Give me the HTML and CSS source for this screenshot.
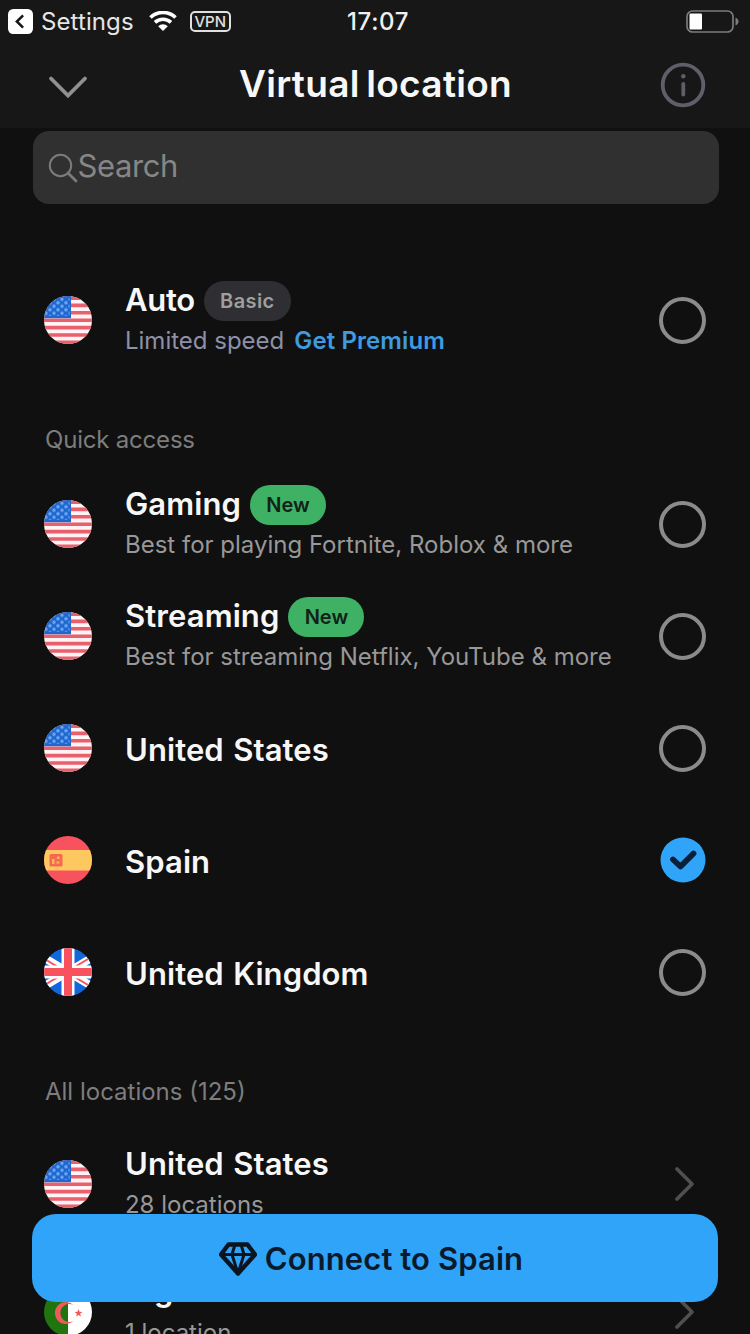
FILE: index.html
```html
<!DOCTYPE html>
<html lang="en">
<head>
<meta charset="utf-8">
<title>Virtual location</title>
<link rel="stylesheet" href="styles.css">
</head>
<body>
<svg class="defs" width="0" height="0" aria-hidden="true">
  <defs>
    <clipPath id="round"><circle cx="24" cy="24" r="24"/></clipPath>
    <pattern id="stars" width="8" height="7" patternUnits="userSpaceOnUse" x="0" y="1.500">
      <circle cx="2" cy="1.750" r="1.700" fill="#6fa9f3"/>
      <circle cx="6" cy="5.250" r="1.700" fill="#6fa9f3"/>
    </pattern>
    <symbol id="us" viewBox="0 0 48 48">
      <g clip-path="url(#round)">
        <rect width="48" height="48" fill="#fff3f5"/>
        <path d="M0 1.900h48M0 9.200h48M0 16.600h48M0 24h48" transform="translate(0 .2)" stroke="#e8606b" stroke-width="3.600"/>
        <path d="M0 31.600h48M0 39h48M0 46.300h48" stroke="#e8606b" stroke-width="3.600"/>
        <rect width="27" height="22.200" fill="#1f66cf"/>
        <rect x="1" y="1.500" width="24.500" height="18.500" fill="url(#stars)"/>
      </g>
    </symbol>
    <symbol id="es" viewBox="0 0 48 48">
      <g clip-path="url(#round)">
        <rect width="48" height="48" fill="#f9525f"/>
        <rect y="14" width="48" height="20.500" fill="#fdc85f"/>
        <rect x="5.500" y="18" width="13" height="12.500" rx="1.500" fill="#f4694f"/>
        <path d="M8 23h2.500v5H8zM13 20.500h2.500v2.500H13zM12.500 25.500h3v2h-3z" fill="#fdb65b"/>
      </g>
    </symbol>
    <symbol id="gb" viewBox="0 0 48 48">
      <g clip-path="url(#round)">
        <rect width="48" height="48" fill="#1267dc"/>
        <path d="M-6 6 54 42M54 6-6 42" stroke="#fff" stroke-width="8"/>
        <path d="M-6 6 24 24M54 42 24 24" stroke="#f9525f" stroke-width="1.800" transform="translate(0 1)"/>
        <path d="M54 6 24 24M-6 42 24 24" stroke="#f9525f" stroke-width="1.800" transform="translate(0 -1)"/>
        <path d="M24 0v48M0 24h48" stroke="#fff" stroke-width="13"/>
        <path d="M24 0v48M0 24h48" stroke="#f9525f" stroke-width="8"/>
      </g>
    </symbol>
    <symbol id="dz" viewBox="0 0 48 48">
      <g clip-path="url(#round)">
        <rect width="24" height="48" fill="#20750f"/>
        <rect x="24" width="24" height="48" fill="#fff"/>
        <path d="M29.500 17a11 11 0 1 0 0 16 9 9 0 1 1 0-16z" fill="#ee5b5b"/>
        <path d="M34.500 21l1 2.800 3 .1-2.400 1.800.9 2.900-2.500-1.700-2.500 1.700.9-2.900-2.400-1.800 3-.1z" fill="#ee5b5b"/>
      </g>
    </symbol>
    <symbol id="next" viewBox="0 0 20 34">
      <path d="M2 2 17 17 2 32" fill="none" stroke="#505050" stroke-width="3.600" stroke-linecap="round" stroke-linejoin="round"/>
    </symbol>
  </defs>
</svg>

<div class="screen">
  <header class="top">
    <div class="status">
      <div class="status-left">
        <svg class="back" viewBox="0 0 24 24"><rect width="24" height="24" rx="5" fill="#fff"/><path d="M14.500 6.200 8.500 12l6 5.800" fill="none" stroke="#161616" stroke-width="2.400"/></svg>
        <span class="back-label">Settings</span>
        <svg class="wifi" viewBox="0 0 28 20"><path d="M1.500 6.500a18 18 0 0 1 25 0M6 11.400a11.700 11.700 0 0 1 16 0" fill="none" stroke="#fff" stroke-width="3.600"/><path d="M14 20 9.200 15.300a6.900 6.900 0 0 1 9.600 0z" fill="#fff"/></svg>
        <span class="vpn">VPN</span>
      </div>
      <span class="clock">17:07</span>
      <svg class="battery" viewBox="0 0 53 23"><rect x="1" y="1" width="46" height="21" rx="5.500" fill="none" stroke="#7c7c7c" stroke-width="1.700"/><rect x="3.500" y="3.500" width="12.500" height="16" rx="1" fill="#fff"/><path d="M49.500 7.500c4 1.500 4 6.500 0 8z" fill="#7c7c7c"/></svg>
    </div>
    <div class="titlebar">
      <svg class="down" viewBox="0 0 40 24"><path d="M3 3.500 20 20.500 37 3.500" fill="none" stroke="#909090" stroke-width="3.800" stroke-linecap="round"/></svg>
      <h1 class="title">Virtual location</h1>
      <svg class="info" viewBox="0 0 46 46"><circle cx="23" cy="23" r="20.300" fill="none" stroke="#5e5f6b" stroke-width="3.800"/><circle cx="23.300" cy="14.200" r="2.200" fill="#5e5f6b"/><path d="M23.300 22v10.500" stroke="#5e5f6b" stroke-width="3.800" stroke-linecap="round"/></svg>
    </div>
  </header>

  <div class="search">
    <svg class="lens" viewBox="0 0 30 30"><circle cx="12.500" cy="12.500" r="10.700" fill="none" stroke="#7b7b7b" stroke-width="2"/><path d="M20 20l8 8" stroke="#7b7b7b" stroke-width="2.800" stroke-linecap="round"/></svg>
    <span class="placeholder">Search</span>
  </div>

  <main class="list">
    <div class="row">
      <svg class="flag"><use href="#us"/></svg>
      <div class="text">
        <div class="line"><span class="name auto">Auto</span><span class="badge basic">Basic</span></div>
        <div class="line sub limited"><span>Limited speed</span><span class="premium">Get Premium</span></div>
      </div>
      <span class="radio"></span>
    </div>

    <h2 class="section quick">Quick access</h2>
    <div class="row">
      <svg class="flag"><use href="#us"/></svg>
      <div class="text">
        <div class="line"><span class="name">Gaming</span><span class="badge new">New</span></div>
        <div class="line sub">Best for playing Fortnite, Roblox &amp; more</div>
      </div>
      <span class="radio"></span>
    </div>
    <div class="row">
      <svg class="flag"><use href="#us"/></svg>
      <div class="text">
        <div class="line"><span class="name">Streaming</span><span class="badge new">New</span></div>
        <div class="line sub">Best for streaming Netflix, YouTube &amp; more</div>
      </div>
      <span class="radio"></span>
    </div>
    <div class="row">
      <svg class="flag"><use href="#us"/></svg>
      <div class="text"><div class="line single"><span class="name">United States</span></div></div>
      <span class="radio"></span>
    </div>
    <div class="row">
      <svg class="flag"><use href="#es"/></svg>
      <div class="text"><div class="line single"><span class="name">Spain</span></div></div>
      <svg class="checked" viewBox="0 0 46 46"><circle cx="23" cy="23" r="22.500" fill="#2fa4f8"/><path d="M13 22.500 20.500 29.500 33.500 16.500" fill="none" stroke="#0b1f38" stroke-width="5.800" stroke-linecap="round" stroke-linejoin="round"/></svg>
    </div>
    <div class="row">
      <svg class="flag"><use href="#gb"/></svg>
      <div class="text"><div class="line single"><span class="name">United Kingdom</span></div></div>
      <span class="radio"></span>
    </div>

    <h2 class="section">All locations (125)</h2>
    <div class="row tall">
      <svg class="flag"><use href="#us"/></svg>
      <div class="text">
        <div class="line"><span class="name">United States</span></div>
        <div class="line sub">28 locations</div>
      </div>
      <svg class="next"><use href="#next"/></svg>
    </div>
    <div class="row tall">
      <svg class="flag"><use href="#dz"/></svg>
      <div class="text">
        <div class="line"><span class="name algeria">Algeria</span></div>
        <div class="line sub">1 location</div>
      </div>
      <svg class="next"><use href="#next"/></svg>
    </div>
  </main>

  <button class="connect" type="button">
    <svg class="gem" viewBox="0 0 38 34"><path d="M9.500 2.500h19L36 12.500 19 31.500 2 12.500z" fill="none" stroke="#0b1520" stroke-width="4.400" stroke-linejoin="round"/><path d="M2 12.500h34M13 12.500l6 19 6-19M13 12.500 16 2.500M25 12.500 22 2.500" fill="none" stroke="#0b1520" stroke-width="3" stroke-linejoin="round"/></svg>
    <span>Connect to Spain</span>
  </button>
</div>
</body>
</html>
```

FILE: styles.css
```css
* { box-sizing: border-box; }

body {
  margin: 0;
  background: #101010;
  font-family: Inter, "Liberation Sans", sans-serif;
  color: #f7f7f7;
}

.defs { position: absolute; }

.screen {
  position: relative;
  width: 750px;
  height: 1334px;
  overflow: hidden;
}

.top { height: 128px; background: #171717; }

.status {
  display: grid;
  grid-template-columns: 1fr auto 1fr;
  align-items: center;
  height: 42px;
  padding: 0 11px 0 8px;
}
.status-left { display: flex; align-items: center; }
.back { width: 25px; height: 25px; }
.back-label { margin-left: 8px; padding-top: 1px; font-size: 24px; line-height: 30px; letter-spacing: 0.1px; color: #e6e6e6; }
.wifi { width: 28px; height: 20px; margin-left: 15px; }
.vpn {
  width: 41px;
  height: 21px;
  margin-left: 13px;
  border: 2px solid #e0e0e0;
  border-radius: 5px;
  font-size: 15px;
  font-weight: 500;
  line-height: 17px;
  text-align: center;
  color: #e0e0e0;
}
.clock { padding: 2px 0 0 9px; font-size: 24px; font-weight: 500; line-height: 30px; letter-spacing: 0.6px; color: #f0f0f0; }
.battery { width: 53px; height: 23px; justify-self: end; }

.titlebar {
  display: grid;
  grid-template-columns: 46px 1fr 46px;
  align-items: center;
  height: 86px;
  padding: 0 44px 1px 45px;
}
.down { width: 40px; height: 24px; margin: 4px 0 0 3px; }
.title {
  margin: 0;
  padding-bottom: 2px;
  font-size: 37px;
  font-weight: 600;
  line-height: 44px;
  letter-spacing: 0.3px;
  word-spacing: -3px;
  text-align: center;
}
.info { width: 46px; height: 46px; }

.search {
  display: flex;
  align-items: center;
  width: 686px;
  height: 73px;
  margin: 3px 0 60px 32.5px;
  padding: 0 15px 4px;
  border-radius: 16px;
  background: #303030;
}
.lens { width: 30px; height: 30px; margin-top: 4px; }
.placeholder { font-size: 31px; line-height: 40px; letter-spacing: -0.4px; color: #868686; }

.row {
  display: flex;
  align-items: center;
  height: 112px;
  padding: 1px 44px 0;
}
.tall { height: 128px; }
.flag { flex: none; width: 48px; height: 48px; margin: 0 0 1px 0.4px; }
.text { flex: 1; margin-left: 32.6px; white-space: nowrap; }
.line { display: flex; align-items: center; height: 40px; }
.single { height: 44px; padding-top: 3px; }
.name {
  padding-bottom: 1px;
  font-size: 31px;
  font-weight: 600;
  line-height: 40px;
  letter-spacing: 0.1px;
  word-spacing: 1.5px;
}
.auto { letter-spacing: -0.3px; }
.algeria { padding-bottom: 5px; letter-spacing: -0.8px; }
.sub { font-size: 24px; line-height: 40px; color: #989898; }
.limited { color: #8d90a8; }
.premium { margin-left: 10px; font-weight: 600; letter-spacing: 0.1px; color: #3f9be0; }

.badge {
  height: 40px;
  margin-left: 9px;
  border-radius: 20px;
  font-size: 20px;
  font-weight: 600;
  line-height: 40px;
  text-align: center;
}
.basic { width: 87px; letter-spacing: 0.4px; background: #2e2e33; color: #9f9f9f; }
.new { width: 76px; background: #3eb165; color: #122218; }

.radio {
  flex: none;
  width: 47px;
  height: 47px;
  border: 4px solid #8b8b8b;
  border-radius: 50%;
}
.checked { flex: none; width: 46px; height: 46px; margin-bottom: 1px; }
.next { flex: none; width: 20px; height: 34px; margin: 0 11px 1px 0; }

.section {
  height: 92px;
  margin: 0;
  padding: 44px 45px 0;
  font-size: 24px;
  font-weight: 400;
  line-height: 40px;
  color: #7d7d7d;
}
.quick { letter-spacing: -0.2px; }

.connect {
  position: absolute;
  left: 32px;
  bottom: 32px;
  display: flex;
  align-items: center;
  justify-content: center;
  width: 686px;
  height: 88px;
  padding: 1px 8px 0 0;
  border: 0;
  border-radius: 24px;
  background: #2fa4f8;
  font: 600 31px/40px Inter, "Liberation Sans", sans-serif;
  letter-spacing: 0.1px;
  color: #0b1a2a;
}
.gem { width: 38px; height: 34px; margin-right: 8px; }
```
